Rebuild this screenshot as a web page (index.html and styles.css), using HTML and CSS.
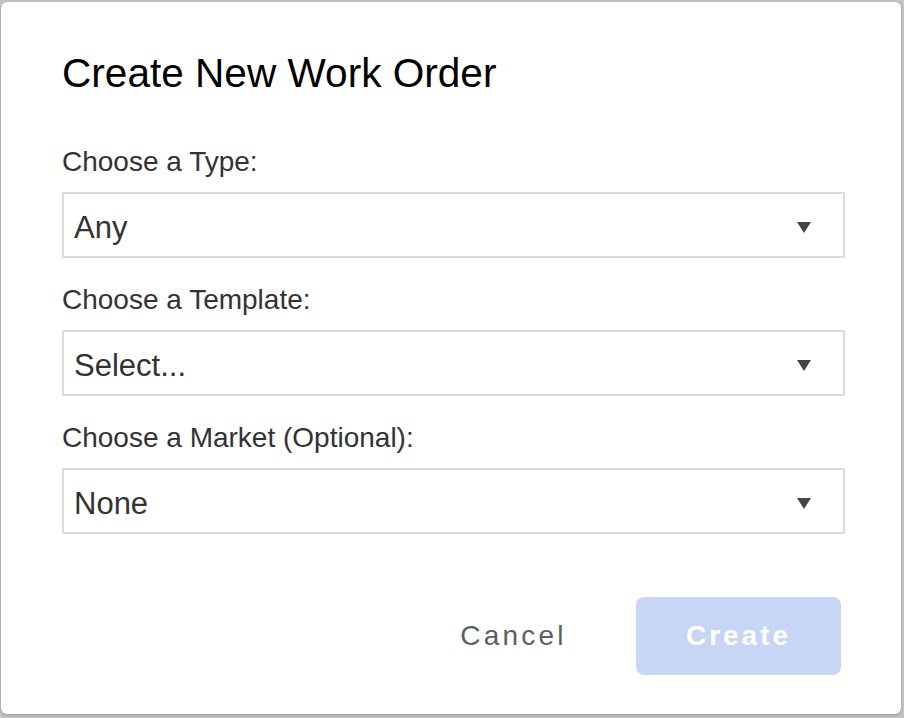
FILE: index.html
```html
<!DOCTYPE html>
<html lang="en">
<head>
<meta charset="utf-8">
<title>Create New Work Order</title>
<link rel="stylesheet" href="styles.css">
</head>
<body>
<div class="dialog">
  <h1 class="title">Create New Work Order</h1>
  <div class="fields">
    <div class="field">
      <label class="label">Choose a Type:</label>
      <div class="select"><span class="value">Any</span><span class="arrow"></span></div>
    </div>
    <div class="field">
      <label class="label">Choose a Template:</label>
      <div class="select"><span class="value">Select...</span><span class="arrow"></span></div>
    </div>
    <div class="field">
      <label class="label">Choose a Market (Optional):</label>
      <div class="select"><span class="value">None</span><span class="arrow"></span></div>
    </div>
  </div>
  <div class="actions">
    <button class="btn btn-cancel">Cancel</button>
    <button class="btn btn-create" disabled>Create</button>
  </div>
</div>
</body>
</html>
```

FILE: styles.css
```css
* { box-sizing: border-box; }
html, body { margin: 0; padding: 0; }
body {
  width: 904px;
  height: 718px;
  background: #c4c4c4;
  font-family: "Liberation Sans", Arial, sans-serif;
  overflow: hidden;
}
.dialog {
  margin: 2px 3px 4px 1px;
  height: 712px;
  background: #ffffff;
  border-radius: 6px;
  box-shadow: 0 1px 3px rgba(0,0,0,0.25);
  padding: 47px 56px 39px 61px;
  display: flex;
  flex-direction: column;
}
.title {
  margin: 0;
  font-size: 40.6px;
  line-height: 48px;
  font-weight: 400;
  color: #000;
}
.fields {
  margin-top: 48px;
  display: flex;
  flex-direction: column;
  gap: 25px;
}
.field {
  display: flex;
  flex-direction: column;
}
.label {
  font-size: 28px;
  line-height: 34px;
  color: #333;
  margin-bottom: 13px;
}
.select {
  height: 66px;
  border: 2px solid #dcdcdc;
  display: flex;
  align-items: center;
  justify-content: space-between;
  padding: 5px 32px 0 10px;
}
.value {
  font-size: 31px;
  color: #333;
  line-height: 36px;
}
.arrow {
  width: 0;
  height: 0;
  border-left: 7px solid transparent;
  border-right: 7px solid transparent;
  border-top: 11px solid #444;
}
.actions {
  margin-top: auto;
  margin-right: 4px;
  display: flex;
  justify-content: flex-end;
  gap: 20px;
}
.btn {
  height: 78px;
  width: 205px;
  border: none;
  border-radius: 8px;
  font-family: "Liberation Sans", Arial, sans-serif;
  font-size: 28px;
  letter-spacing: 3.2px;
  background: transparent;
  padding: 0;
}
.btn-cancel {
  color: #5c5f63;
}
.btn-create {
  background: #c6d6f4;
  color: #ffffff;
  font-weight: 700;
  letter-spacing: 3px;
}
```
